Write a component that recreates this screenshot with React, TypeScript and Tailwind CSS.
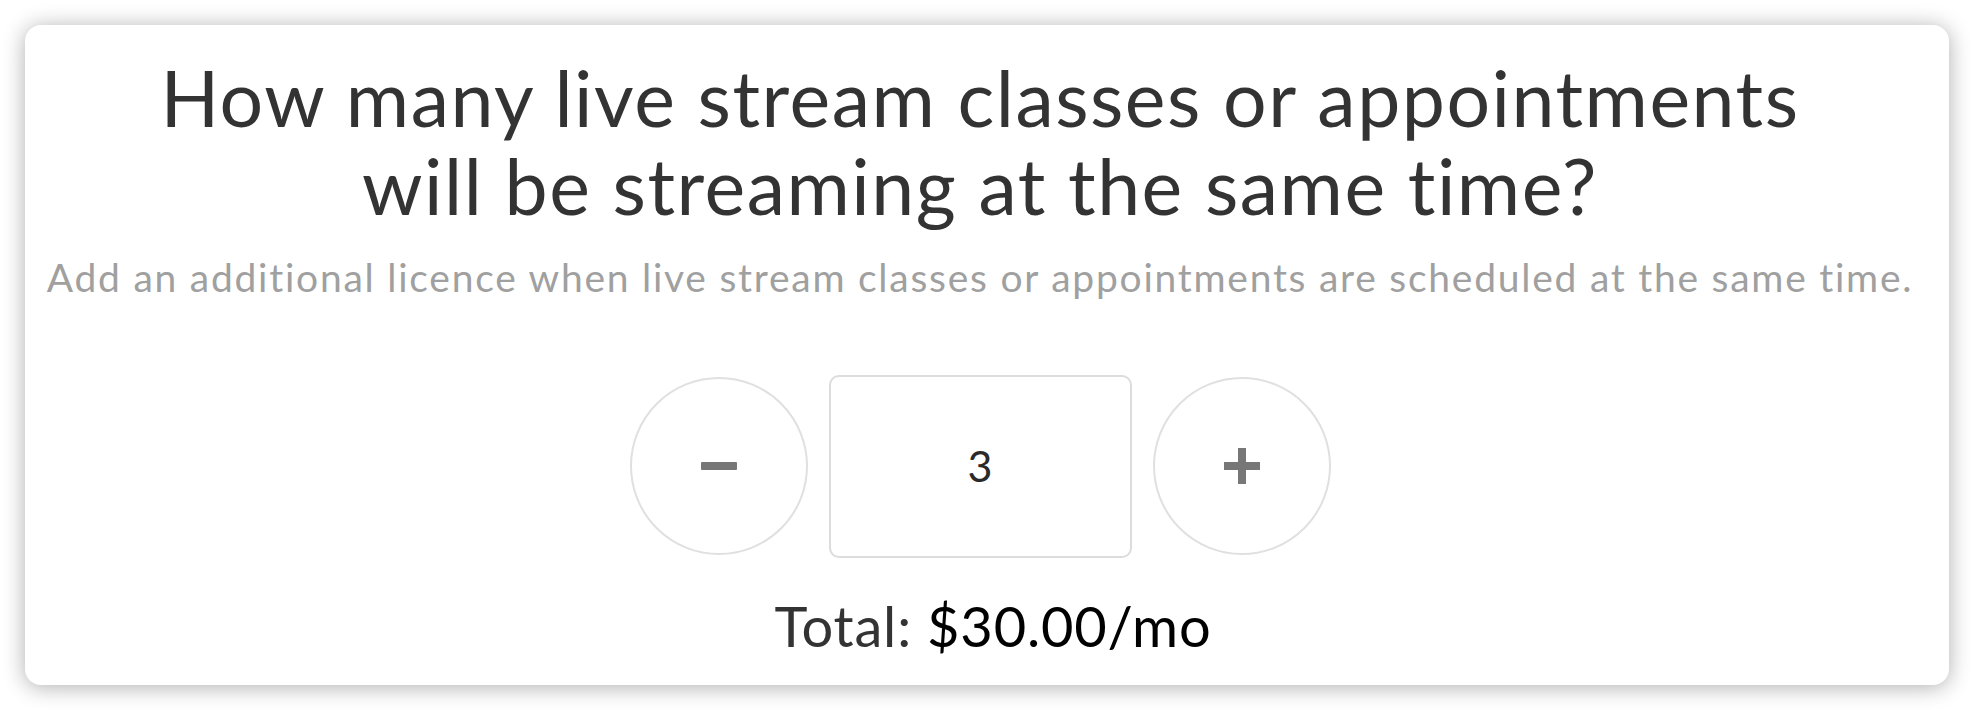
import { useState } from "react";

const font = { fontFamily: "Lato, 'Noto Sans', sans-serif" };

export default function App() {
  const [count, setCount] = useState(3);

  return (
    <div className="w-[1974px] h-[710px] bg-white p-[25px]" style={font}>
      <div className="flex flex-col items-center rounded-[16px] bg-white pt-[28px] pb-[26px] pr-[14px] shadow-[0_2px_22px_rgba(0,0,0,0.32)]">
        <h1 className="text-center text-[77px] leading-[88px] tracking-[1.5px] font-normal text-[#333333]">
          How many live stream classes or appointments
          <br />
          will be streaming at the same time?
        </h1>
        <p className="mt-[24px] text-center text-[39px] leading-[48px] tracking-[1.75px] text-[#a0a0a0]">
          Add an additional licence when live stream classes or appointments are scheduled at the same time.
        </p>

        <div className="mt-[74px] flex h-[182px] items-center gap-[21px]">
          <button
            type="button"
            onClick={() => setCount((c) => Math.max(1, c - 1))}
            className="flex h-[178px] w-[178px] items-center justify-center rounded-full border-2 border-[#e0e0e0] bg-white"
            aria-label="Decrease"
          >
            <span className="block h-[8px] w-[36px] rounded-[1px] bg-[#777777]" />
          </button>
          <div className="flex h-[183px] w-[303px] items-center justify-center rounded-[10px] border-2 border-[#dcdcdc] bg-white text-[43px] text-[#2a2a2a]">
            {count}
          </div>
          <button
            type="button"
            onClick={() => setCount((c) => c + 1)}
            className="flex h-[178px] w-[178px] items-center justify-center rounded-full border-2 border-[#e0e0e0] bg-white"
            aria-label="Increase"
          >
            <span className="relative block h-[36px] w-[36px]">
              <span className="absolute left-0 top-[14px] block h-[8px] w-[36px] bg-[#777777]" />
              <span className="absolute left-[14px] top-0 block h-[36px] w-[8px] bg-[#777777]" />
            </span>
          </button>
        </div>

        <div className="mt-[35px] ml-[26px] text-[56px] leading-[67px] tracking-[0.8px]">
          <span className="text-[#333333]">Total: </span>
          <span className="text-black">${(count * 10).toFixed(2)}/mo</span>
        </div>
      </div>
    </div>
  );
}
